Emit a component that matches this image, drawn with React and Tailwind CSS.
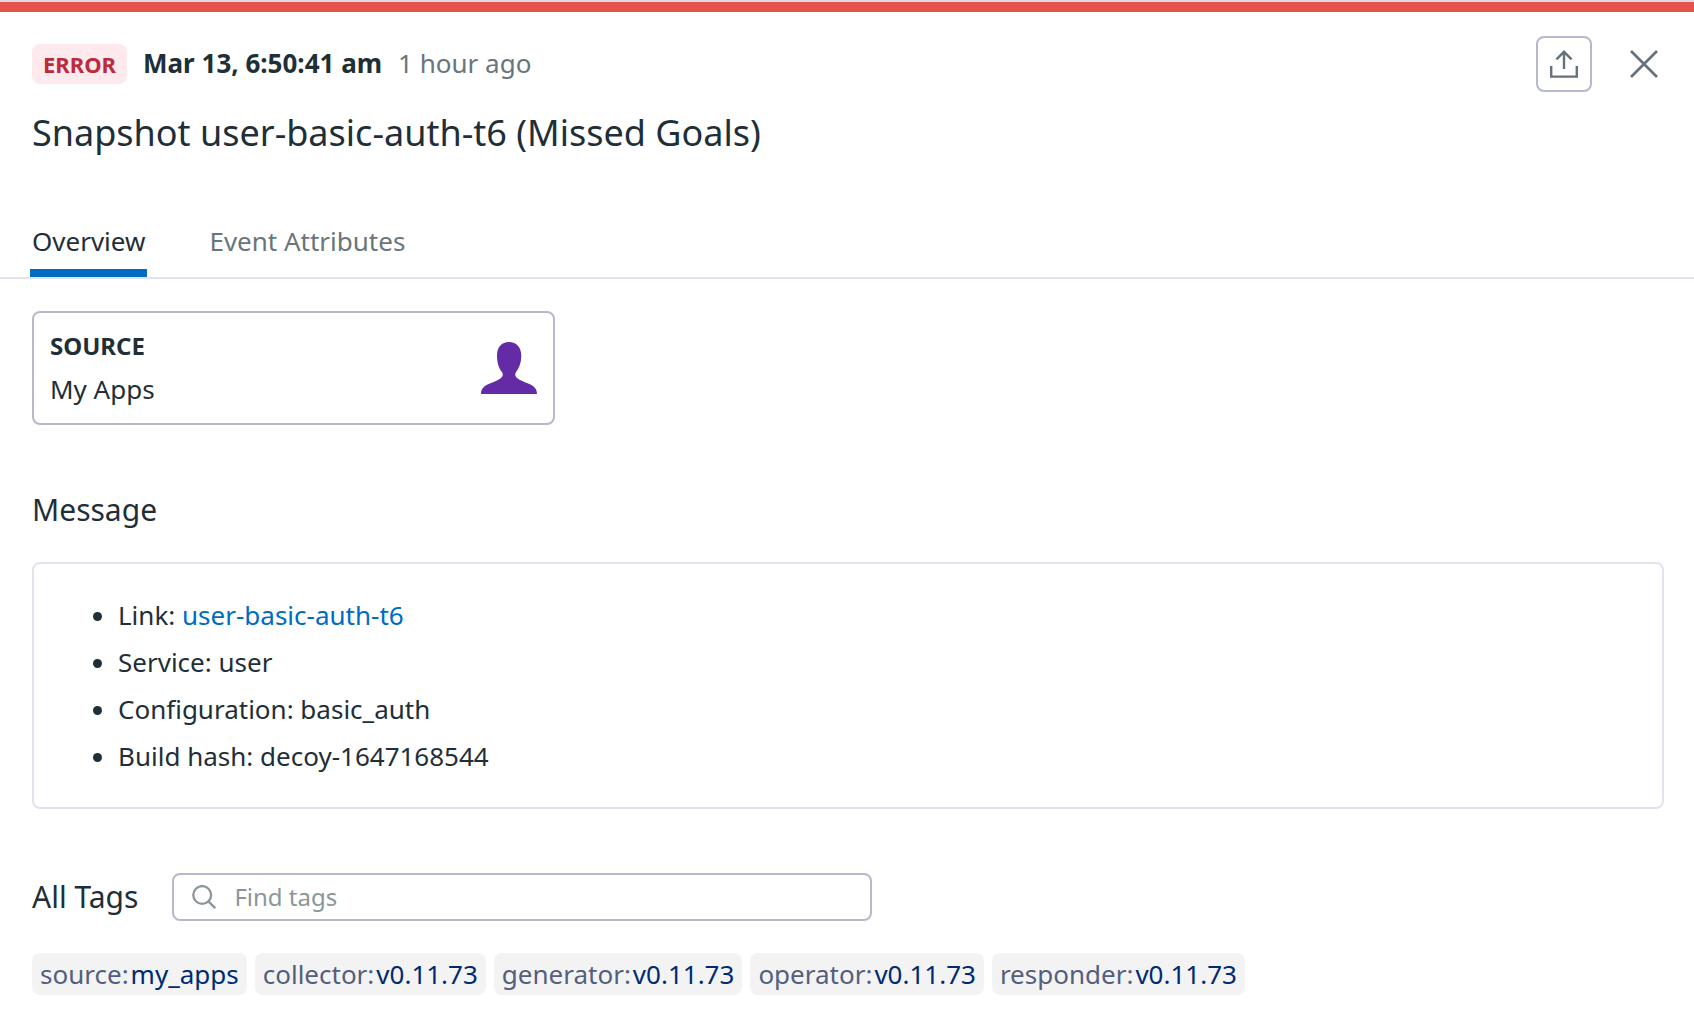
import { useState } from "react";

const tags = [
  ["source", "my_apps"],
  ["collector", "v0.11.73"],
  ["generator", "v0.11.73"],
  ["operator", "v0.11.73"],
  ["responder", "v0.11.73"],
];

function ShareIcon() {
  return (
    <svg viewBox="0 0 28 28" className="size-7" fill="none" stroke="currentColor" strokeWidth="2.4" aria-hidden="true">
      <path d="M14 19V2M6.400 9.400 14 1.800l7.600 7.600M1.200 16v10.600h25.600V16" />
    </svg>
  );
}

function CloseIcon() {
  return (
    <svg viewBox="0 0 28 28" className="size-7" fill="none" stroke="currentColor" strokeWidth="2.7" aria-hidden="true">
      <path d="M1 1l26 26M27 1 1 27" />
    </svg>
  );
}

function SearchIcon() {
  return (
    <svg viewBox="0 0 24 24" className="size-6 shrink-0 text-[#8a9699]" fill="none" stroke="currentColor" strokeWidth="2.3" aria-hidden="true">
      <circle cx="10.2" cy="10" r="8.900" />
      <path d="M16.400 16.400l6.800 6.800" />
    </svg>
  );
}

function PersonIcon() {
  return (
    <svg viewBox="0 0 56 52" className="h-[52px] w-14 shrink-0" fill="#632ca6" aria-hidden="true">
      <path d="M28 0c7.400 0 12.300 5.200 12.300 13.500 0 6.500-1.500 11.500-5.200 16.600-1.200 1.700-1.200 3.700.2 5.200 1.600 1.900 4.300 3.300 8 4.600C50.500 42.500 56 44.500 56 52H0c0-7.500 5.500-9.500 12.700-12.100 3.700-1.300 6.400-2.700 8-4.600 1.400-1.500 1.400-3.500.2-5.200-3.700-5.100-4.900-10.100-4.900-16.600C16 5.200 20.600 0 28 0z" />
    </svg>
  );
}

export default function App() {
  const [query, setQuery] = useState("");
  return (
    <main className="min-h-screen border-t-2 border-[#dcdce0] bg-white font-['Noto_Sans',sans-serif] text-[26px] leading-9 text-[#1f2f38]">
      <div className="h-2.5 bg-[#e4534b]" />

      <header className="pt-6 pr-[30px] pl-8">
        <div className="flex items-center justify-between">
          <div className="flex items-baseline gap-4">
            <span className="rounded-lg bg-[#feeaed] px-[11px] py-0.5 text-[22px] font-bold text-[#bb2a3d]">ERROR</span>
            <time className="font-bold">Mar 13, 6:50:41 am</time>
            <span className="text-[#69757b]">1 hour ago</span>
          </div>
          <div className="flex items-center gap-8 text-[#65727a]">
            <button type="button" aria-label="Share" className="flex size-14 items-center justify-center rounded-lg border-2 border-[#b6b9cc]">
              <ShareIcon />
            </button>
            <button type="button" aria-label="Close" className="p-1.5">
              <CloseIcon />
            </button>
          </div>
        </div>
        <h1 className="mt-4 text-[36px] leading-[50px]">Snapshot user-basic-auth-t6 (Missed Goals)</h1>
      </header>

      <nav role="tablist" className="mt-15 flex gap-15 border-b-2 border-[#e1e4ef] px-[30px]">
        <button type="button" role="tab" aria-selected="true" className="border-b-8 border-[#006bc2] px-0.5 pt-[5px] pb-2.5">Overview</button>
        <button type="button" role="tab" aria-selected="false" className="border-b-8 border-transparent px-0.5 pt-[5px] pb-2.5 text-[#69757b]">Event Attributes</button>
      </nav>

      <div className="pt-8 pr-[30px] pb-4 pl-8">
        <section className="flex max-w-[523px] items-center justify-between rounded-lg border-2 border-[#b6b9cc] px-4 py-3">
          <div>
            <h2 className="text-[24px] leading-[42px] font-bold">SOURCE</h2>
            <p className="leading-11">My Apps</p>
          </div>
          <PersonIcon />
        </section>

        <h2 className="mt-16 text-[30px] leading-[42px]">Message</h2>
        <ul className="mt-[31px] list-disc rounded-lg border-2 border-[#e1e4ef] pt-7 pr-8 pb-[27px] pl-21 leading-[47px]">
          <li>Link: <a href="#snapshot" className="text-[#006bc2]">user-basic-auth-t6</a></li>
          <li>Service: user</li>
          <li>Configuration: basic_auth</li>
          <li>Build hash: decoy-1647168544</li>
        </ul>

        <div className="mt-16 flex items-center gap-[34px]">
          <label htmlFor="find-tags" className="text-[30px] leading-[42px]">All Tags</label>
          <div className="flex h-12 w-full max-w-[700px] items-center gap-[18px] rounded-lg border-2 border-[#b6b9cc] px-[18px]">
            <SearchIcon />
            <input
              id="find-tags"
              type="text"
              value={query}
              onChange={(e) => setQuery(e.target.value)}
              placeholder="Find tags"
              className="min-w-0 flex-1 text-[24px] leading-9 outline-none placeholder:text-[#8a9699]"
            />
          </div>
        </div>

        <ul className="mt-8 flex flex-wrap gap-2">
          {tags.filter((t) => t.join(":").includes(query)).map(([key, value]) => (
            <li key={key} className="flex gap-0.5 rounded-lg bg-[#f3f3f4] px-2 py-[3px]">
              <span className="text-[#535f7d]">{key}:</span>
              <span className="text-[#002b70]">{value}</span>
            </li>
          ))}
        </ul>
      </div>
    </main>
  );
}
